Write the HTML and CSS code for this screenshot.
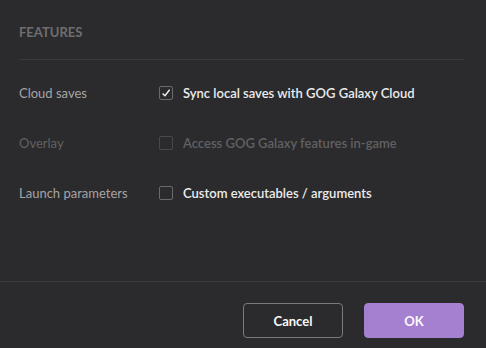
FILE: index.html
```html
<!DOCTYPE html>
<html>
<head>
	<meta charset="utf-8">
	<title>Features</title>
	<link rel="stylesheet" href="styles.css">
</head>
<body>
<div class="dialog">
	<div class="content">
		<div class="section-title">FEATURES</div>
		<div class="rows">
			<div class="row">
				<span class="label">Cloud saves</span>
				<label class="check checked"><span class="box"><svg width="10" height="10" viewBox="0 0 10 10"><path d="M1.6 5.4 L4 7.8 L8.6 1.8" fill="none" stroke="#f2f2f2" stroke-width="1.4"/></svg></span>Sync local saves with GOG Galaxy Cloud</label>
			</div>
			<div class="row disabled">
				<span class="label">Overlay</span>
				<label class="check"><span class="box"></span>Access GOG Galaxy features in-game</label>
			</div>
			<div class="row">
				<span class="label">Launch parameters</span>
				<label class="check"><span class="box"></span>Custom executables / arguments</label>
			</div>
		</div>
	</div>
	<div class="footer">
		<button class="btn btn-cancel">Cancel</button>
		<button class="btn btn-ok">OK</button>
	</div>
</div>
</body>
</html>
```

FILE: styles.css
```css
* {
	box-sizing: border-box;
}

body {
	margin: 0;
	padding: 0;
	background: #2b2b2d;
	font-family: Lato, "Liberation Sans", sans-serif;
	font-size: 13px;
	overflow: hidden;
}

.dialog {
	width: 486px;
	height: 348px;
	display: flex;
	flex-direction: column;
}

.content {
	flex: 1;
	padding: 0 22px 0 19px;
}

.section-title {
	height: 60px;
	padding-top: 24px;
	line-height: 16px;
	font-size: 13px;
	font-weight: bold;
	color: #6e6e70;
	border-bottom: 1px solid #3a3a3c;
}

.rows {
	padding-top: 8px;
}

.row {
	height: 50px;
	display: flex;
	align-items: center;
}

.label {
	width: 140px;
	color: #a4a4a6;
}

.check {
	display: flex;
	align-items: center;
	gap: 10px;
	color: #ececec;
	font-weight: 600;
}

.box {
	width: 14px;
	height: 14px;
	border: 1px solid #6a6a6c;
	border-radius: 2px;
	display: flex;
	align-items: center;
	justify-content: center;
}

.row.disabled .label,
.row.disabled .check {
	color: #616163;
}

.row.disabled .box {
	border-color: #49494b;
}

.footer {
	height: 67px;
	border-top: 1px solid #3a3a3c;
	display: flex;
	justify-content: flex-end;
	gap: 21px;
	padding: 21px 22px 0 0;
}

.btn {
	width: 100px;
	height: 35px;
	border-radius: 4px;
	font-family: Lato, "Liberation Sans", sans-serif;
	font-size: 13px;
	font-weight: bold;
	color: #fafafa;
	cursor: pointer;
}

.btn-cancel {
	background: #2b2b2d;
	border: 1px solid #7a7a7c;
}

.btn-ok {
	background: #a57fd0;
	border: 1px solid #a57fd0;
}
```
